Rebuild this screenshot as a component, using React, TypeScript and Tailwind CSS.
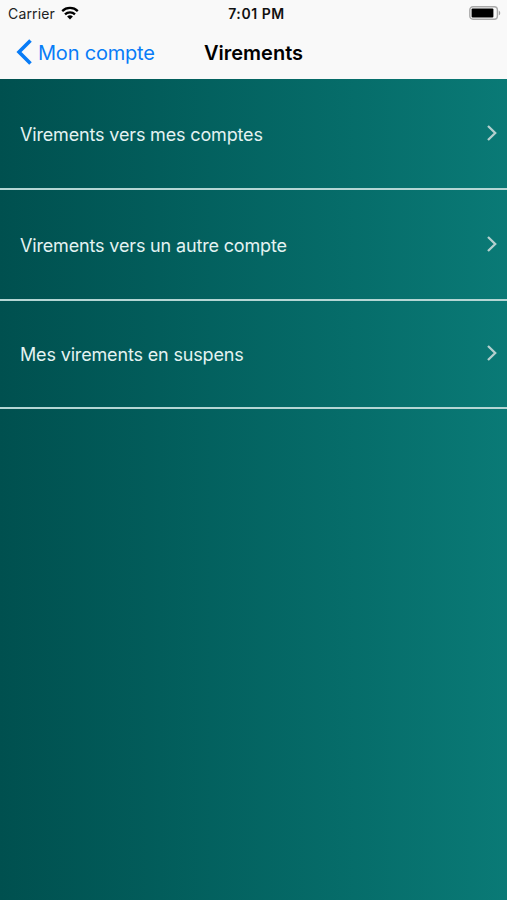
function WifiIcon() {
  return (
    <svg width="18" height="14" viewBox="0 0 18 14" fill="none" className="-mt-px ml-[6px]">
      <path d="M1.2 5.1a11.2 11.2 0 0 1 15.6 0" stroke="#000" strokeWidth="2.3" />
      <path d="M4 8.4a7.2 7.2 0 0 1 10 0" stroke="#000" strokeWidth="2.3" />
      <path d="M9 13.4 6.1 10.6a4.2 4.2 0 0 1 5.8 0Z" fill="#000" />
    </svg>
  );
}

function BatteryIcon() {
  return (
    <svg width="32" height="14" viewBox="0 0 32 14" fill="none" className="-mt-px">
      <rect x="0.8" y="0.8" width="27.6" height="12.4" rx="3.2" stroke="#a9a9a9" strokeWidth="1.4" />
      <rect x="2.6" y="2.5" width="21.8" height="9" rx="1" fill="#000" />
      <path d="M29.8 4.7c1.9.6 1.9 4 0 4.6Z" fill="#a0a0a0" />
    </svg>
  );
}

function ChevronRight() {
  return (
    <svg width="12" height="18" viewBox="0 0 12 18" fill="none" className="-mt-[3px]">
      <path d="m2 2 7.2 7L2 16" stroke="#b5d0cf" strokeWidth="2.3" />
    </svg>
  );
}

const items = [
  { label: "Virements vers mes comptes", height: "h-[110px]" },
  { label: "Virements vers un autre compte", height: "h-[111px] pt-[2px]" },
  { label: "Mes virements en suspens", height: "h-[108px] pt-px" },
];

export default function App() {
  return (
    <div className="flex h-[900px] w-[507px] flex-col overflow-hidden bg-linear-to-r from-[#00504f] to-[#0a7a76] font-['Inter','Liberation_Sans',sans-serif]">
      <header className="h-[79px] shrink-0 bg-[#f9f9f9] text-black">
        <div className="grid h-[27px] grid-cols-3 items-center pl-2 pr-[6px]">
          <div className="flex items-center">
            <span className="text-[14px] tracking-[0.15px] text-[#222]">Carrier</span>
            <WifiIcon />
          </div>
          <span className="pl-1 text-center text-[14px] font-semibold tracking-[0.55px] text-[#111]">7:01 PM</span>
          <div className="flex justify-end">
            <BatteryIcon />
          </div>
        </div>
        <nav className="grid h-[51px] grid-cols-[1fr_auto_1fr] items-center pl-4 pr-4">
          <button className="flex items-center gap-[5px] text-[20px] tracking-[-0.2px] text-[#087cf7]">
            <svg width="17" height="28" viewBox="0 0 17 28" fill="none" className="-mt-px">
              <path d="M14.5 2.5 3 14l11.5 11.5" stroke="currentColor" strokeWidth="3.6" />
            </svg>
            Mon compte
          </button>
          <h1 className="text-[20px] font-semibold">Virements</h1>
        </nav>
      </header>
      <main className="pt-px">
        {items.map((item) => (
          <button
            key={item.label}
            className={`flex w-full items-center justify-between border-b-2 border-[#b4d6d4] pl-5 pr-[9px] text-[18px] tracking-[-0.16px] text-[#e4f3f2] ${item.height}`}
          >
            <span>{item.label}</span>
            <ChevronRight />
          </button>
        ))}
      </main>
    </div>
  );
}
